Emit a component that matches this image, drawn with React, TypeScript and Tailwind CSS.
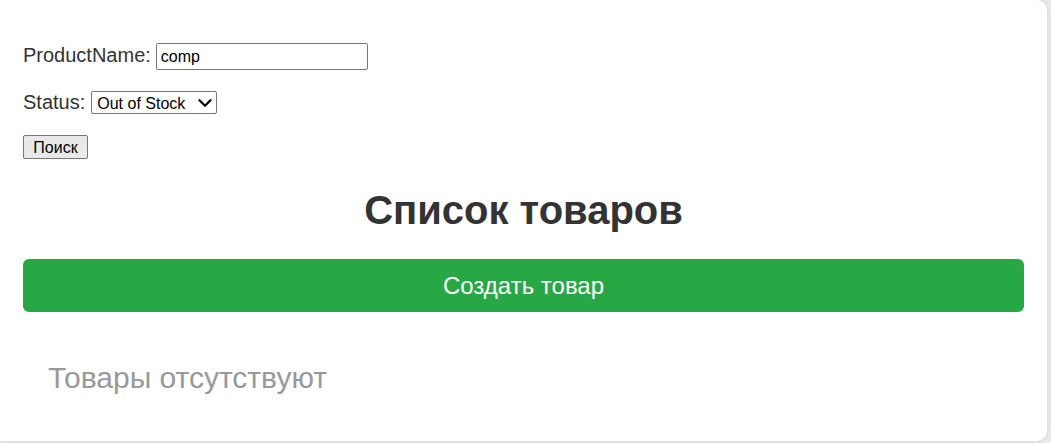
import { useState } from 'react';
import { ChevronDown } from 'lucide-react';

const ProductList: React.FC = () => {
  const [productName, setProductName] = useState<string>('comp');
  const [status, setStatus] = useState<string>('out');
  const products: string[] = [];

  return (
    <div className="min-h-screen bg-[#ececec] font-['Liberation_Sans',Arial,sans-serif]">
      <div className="w-[1047px] h-[441px] bg-white rounded-r-[10px] shadow-[0_0_6px_rgba(0,0,0,0.12)] px-[23px] pt-[43px]">
        <form className="flex flex-col" onSubmit={(e) => e.preventDefault()}>
          <div className="flex items-center h-[27px] text-[20px] text-[#333]">
            <label htmlFor="productName" className="-mt-[3px]">ProductName:</label>
            <input
              id="productName"
              type="text"
              value={productName}
              onChange={(e) => setProductName(e.target.value)}
              className="ml-[5px] w-[212px] h-[27px] border border-[#767676] rounded-[2px] px-[4px] text-[16px] text-black outline-none"
            />
          </div>
          <div className="flex items-center h-[23px] mt-[21px] text-[20px] text-[#333]">
            <label htmlFor="status" className="-mt-[2px]">Status:</label>
            <div className="relative ml-[6px]">
              <select
                id="status"
                value={status}
                onChange={(e) => setStatus(e.target.value)}
                className="block appearance-none w-[126px] h-[23px] border border-[#767676] rounded-[2px] pl-[5px] pr-[20px] text-[16px] text-black bg-white outline-none"
              >
                <option value="all">All</option>
                <option value="in">In Stock</option>
                <option value="out">Out of Stock</option>
              </select>
              <ChevronDown
                size={22}
                strokeWidth={2.5}
                className="absolute right-[1px] top-[1px] text-black pointer-events-none"
              />
            </div>
          </div>
          <div className="mt-[21px]">
            <button
              type="submit"
              className="w-[65px] h-[24px] bg-[#e9e9e9] border border-[#767676] rounded-[2px] text-[16px] text-black"
            >
              Поиск
            </button>
          </div>
        </form>

        <h1 className="mt-[27px] h-[46px] leading-[46px] text-center text-[40px] font-bold text-[#333]">
          Список товаров
        </h1>

        <button className="mt-[26px] w-full h-[53px] bg-[#28a745] rounded-[6px] text-white text-[24px]">
          Создать товар
        </button>

        {products.length === 0 && (
          <p className="mt-[48px] pl-[25px] h-[36px] leading-[36px] text-[30px] text-[#999]">
            Товары отсутствуют
          </p>
        )}
      </div>
    </div>
  );
};

export default ProductList;
